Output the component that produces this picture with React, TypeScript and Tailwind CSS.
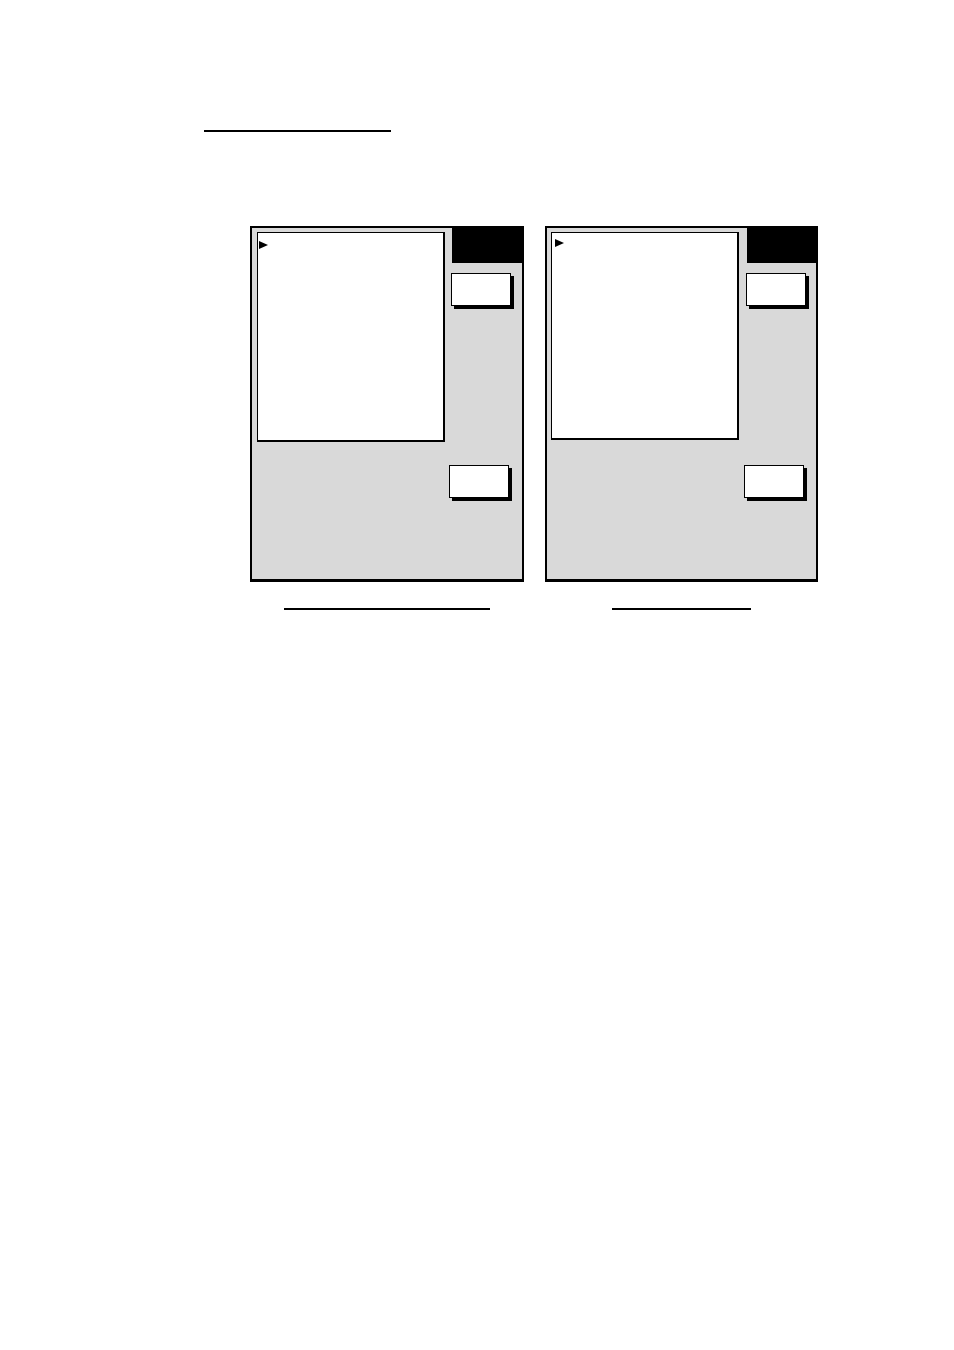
import React from "react";

type PanelProps = {
  width: number;
  boxInset: string;
  boxHeight: string;
  arrowOffset: string;
  colWidth: string;
  btn1Shift: string;
  btn2Shift: string;
  captionWidth: string;
};

function Arrow({ className }: { className: string }) {
  return (
    <svg className={className} width="9" height="8" viewBox="0 0 9 8">
      <polygon points="0,0 9,4 0,8" fill="#000" />
    </svg>
  );
}

function Button({ className }: { className: string }) {
  return (
    <div
      className={`h-[33px] w-[60px] border border-black bg-white shadow-[3px_3px_0_#000] ${className}`}
    />
  );
}

function Panel(p: PanelProps & { panelW: string }) {
  return (
    <div className="flex flex-col items-center">
      <div
        className={`${p.panelW} flex h-[356px] items-start border-x-2 border-t-2 border-b-[3px] border-black bg-[#d9d9d9]`}
      >
        {/* list area */}
        <div
          className={`${p.boxInset} ${p.boxHeight} mt-[4px] w-[188px] border-t border-l border-r-2 border-b-2 border-black bg-white`}
        >
          <Arrow className={p.arrowOffset} />
        </div>

        {/* side column */}
        <div className={`ml-auto flex ${p.colWidth} flex-col`}>
          <div className="h-[35px] w-full bg-black" />
          <Button className={`mt-[10px] ${p.btn1Shift}`} />
          <Button className={`mt-[159px] ${p.btn2Shift}`} />
        </div>
      </div>
      <div className={`mt-[26px] h-[2px] ${p.captionWidth} bg-black`} />
    </div>
  );
}

export default function App() {
  return (
    <div className="h-[1350px] w-[954px] bg-white pt-[130px] font-['Liberation_Sans',sans-serif]">
      <div className="ml-[204px] h-[2px] w-[187px] bg-black" />

      <div className="mt-[94px] ml-[250px] flex gap-[21px]">
        <Panel
          width={274}
          panelW="w-[274px]"
          boxInset="ml-[5px]"
          boxHeight="h-[210px]"
          arrowOffset="ml-[1px] mt-[8px]"
          colWidth="w-[70px]"
          btn1Shift="-ml-[1px]"
          btn2Shift="-ml-[3px]"
          captionWidth="w-[206px]"
        />
        <Panel
          width={273}
          panelW="w-[273px]"
          boxInset="ml-[4px]"
          boxHeight="h-[208px]"
          arrowOffset="ml-[3px] mt-[6px]"
          colWidth="w-[69px]"
          btn1Shift="-ml-[1px]"
          btn2Shift="-ml-[3px]"
          captionWidth="w-[139px]"
        />
      </div>
    </div>
  );
}
